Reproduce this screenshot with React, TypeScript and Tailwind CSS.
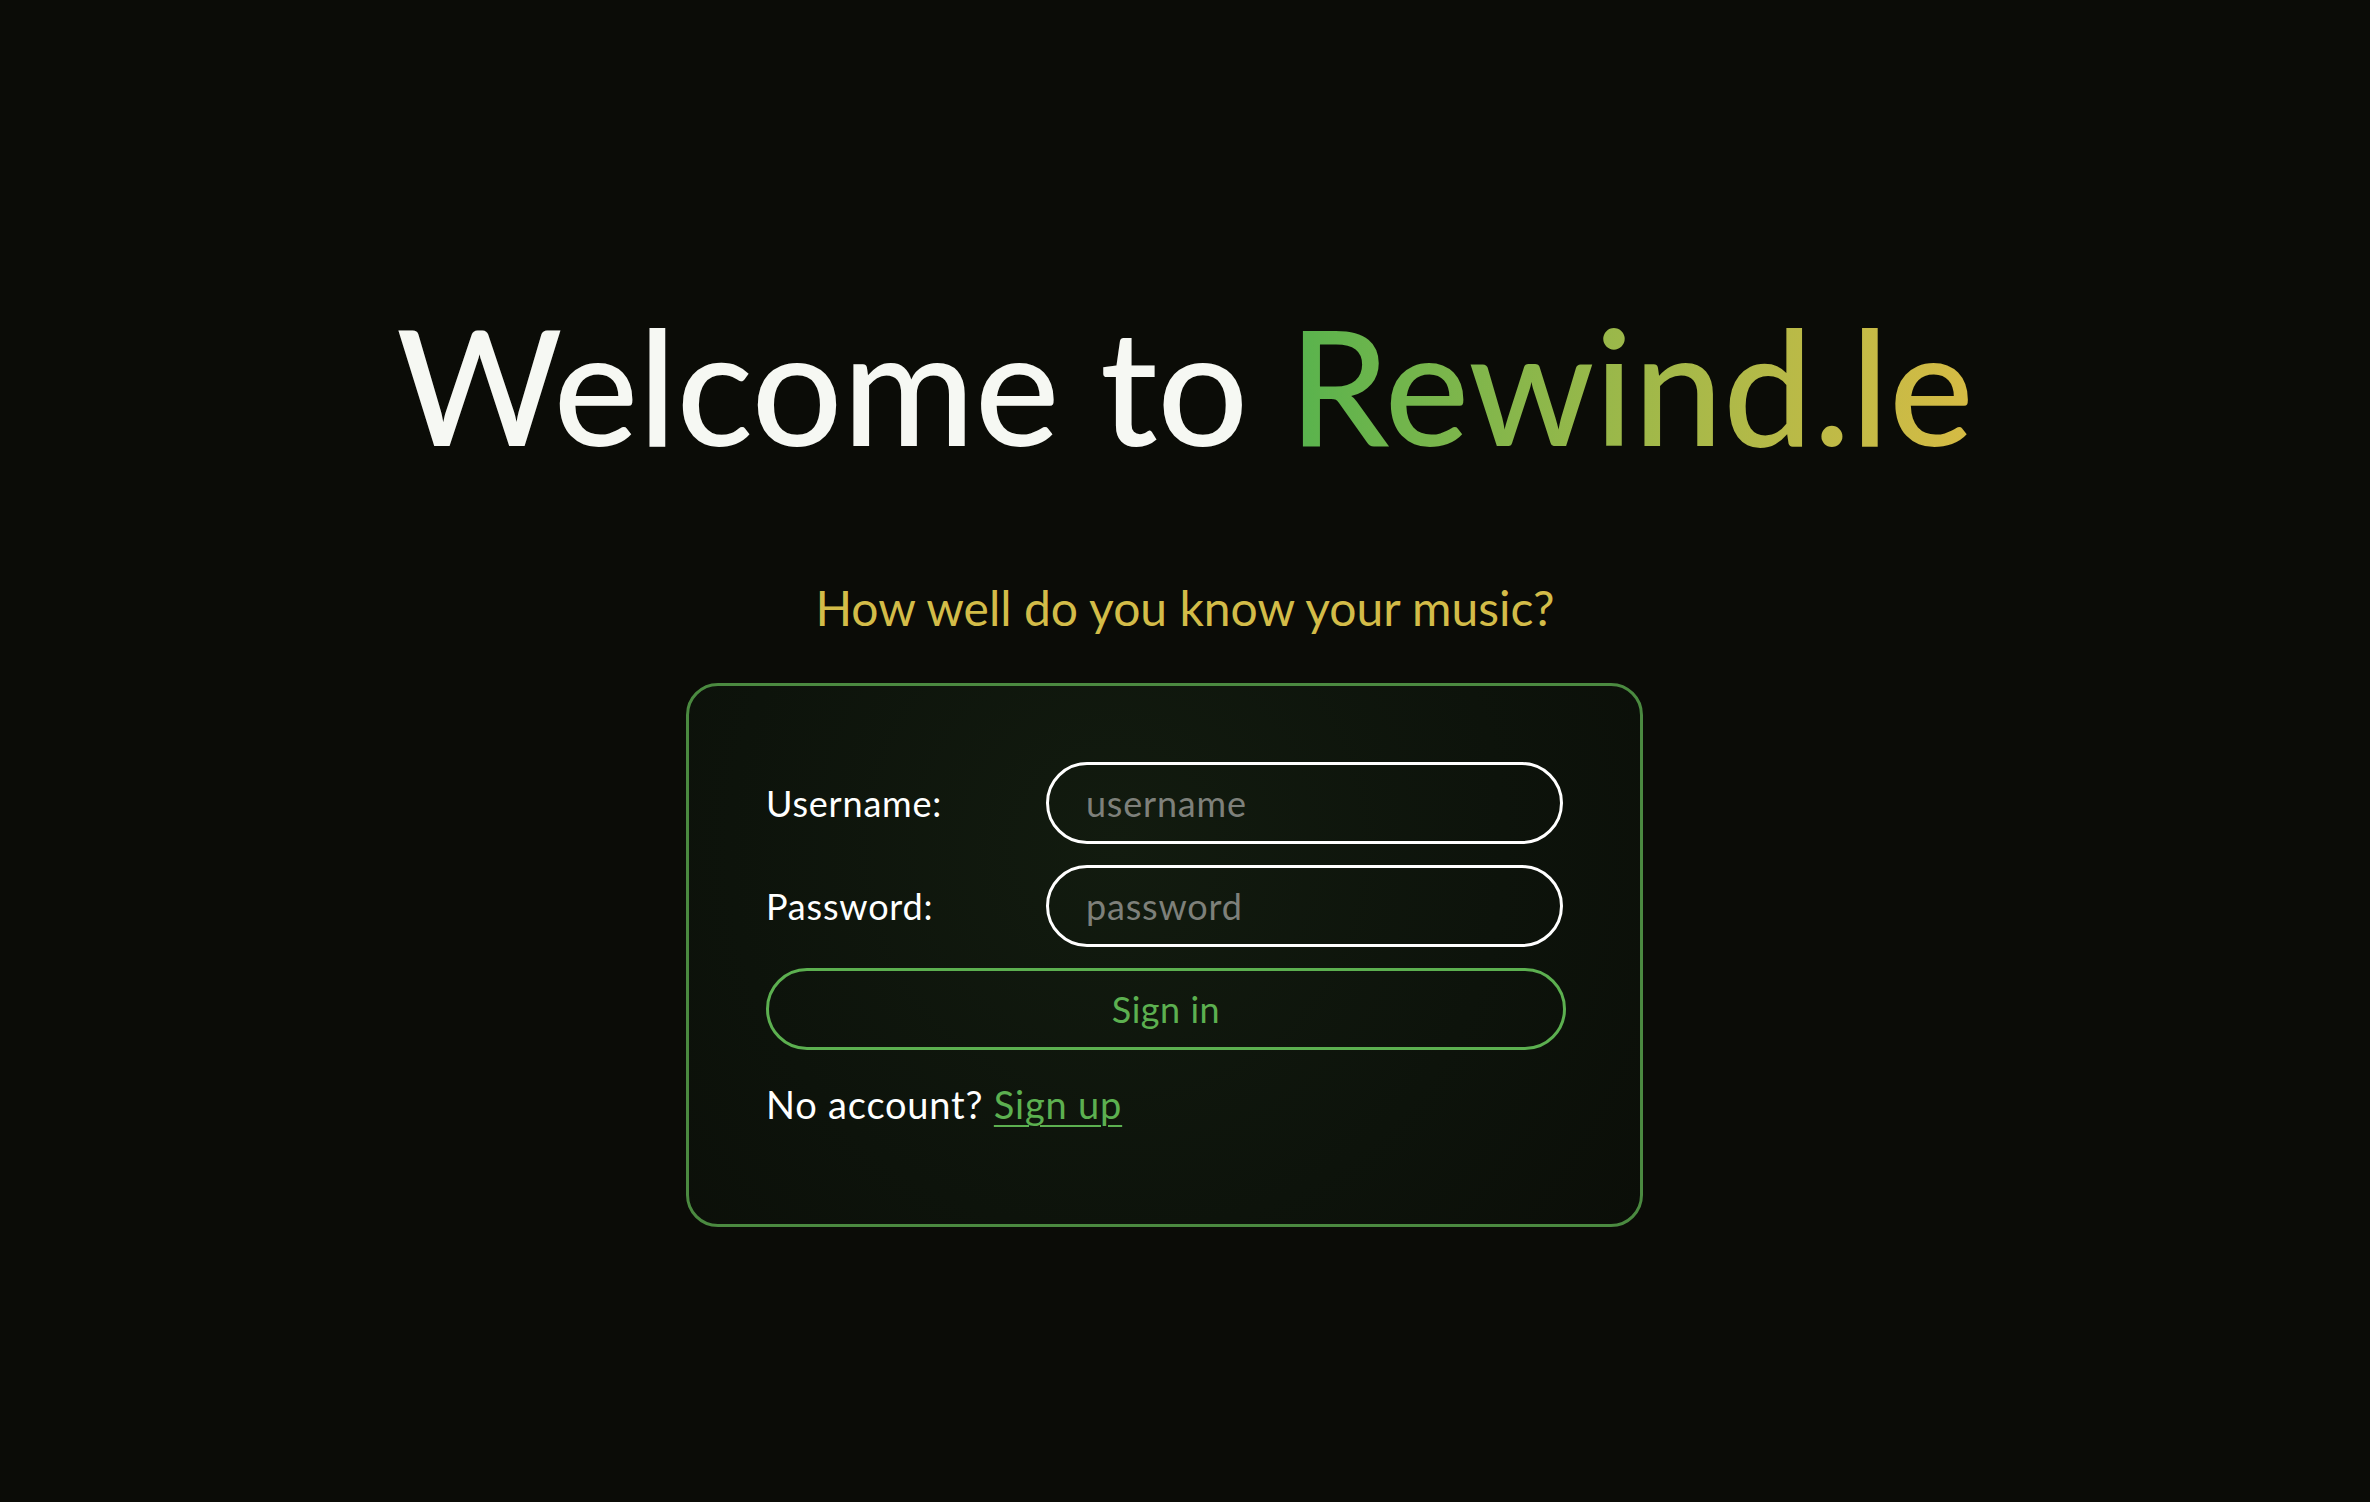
export default function App() {
  return (
    <div
      className="min-h-screen w-full bg-[#0b0c07] flex flex-col items-center"
      style={{ fontFamily: "Lato, 'Noto Sans', sans-serif" }}
    >
      {/* Heading */}
      <h1 className="mt-[284px] text-[160px] leading-[200px] font-medium tracking-[0px] text-[#f6f8f3] whitespace-nowrap">
        Welcome to{" "}
        <span className="bg-gradient-to-r from-[#56b34d] to-[#d6bb44] bg-clip-text text-transparent">
          Rewind.le
        </span>
      </h1>

      <p className="mt-[92px] text-[48px] leading-[64px] text-[#d3bc48]">
        How well do you know your music?
      </p>

      {/* Login card */}
      <div className="mt-[43px] mr-[41px] w-[957px] h-[544px] rounded-[32px] border-[3px] border-[#4b8a40] bg-[radial-gradient(circle_at_45%_30%,#121b0f_0%,#0d130b_60%,#0b0e08_100%)] px-[77px] pt-[76px]">
        <form className="flex flex-col gap-[21px]" onSubmit={(e) => e.preventDefault()}>
          <div className="flex items-center">
            <label htmlFor="username" className="w-[283px] text-[36px] tracking-[0.8px] text-white">
              Username:
            </label>
            <input
              id="username"
              type="text"
              placeholder="username"
              className="w-[517px] h-[82px] rounded-full border-[3px] border-white bg-transparent px-[37px] text-[36px] tracking-[0.8px] text-white placeholder:text-[#7e807a] outline-none"
            />
          </div>
          <div className="flex items-center">
            <label htmlFor="password" className="w-[283px] text-[36px] tracking-[0.8px] text-white">
              Password:
            </label>
            <input
              id="password"
              type="password"
              placeholder="password"
              className="w-[517px] h-[82px] rounded-full border-[3px] border-white bg-transparent px-[37px] text-[36px] tracking-[0.8px] text-white placeholder:text-[#7e807a] outline-none"
            />
          </div>
          <button
            type="submit"
            className="w-[800px] h-[82px] rounded-full border-[3px] border-[#5cb050] bg-transparent text-[36px] tracking-[0.5px] text-[#5cb050]"
          >
            Sign in
          </button>
        </form>
        <p className="mt-[26px] text-[38px] tracking-[0.8px] text-white">
          No account?{" "}
          <a href="#" className="text-[#5cb050] underline decoration-2 underline-offset-[6px]">
            Sign up
          </a>
        </p>
      </div>
    </div>
  );
}
